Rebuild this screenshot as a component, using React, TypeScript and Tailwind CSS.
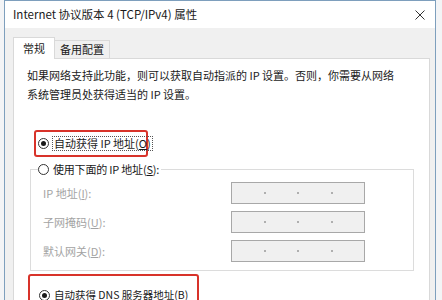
import React from "react";

const FONT = { fontFamily: "'Noto Sans CJK SC', 'Noto Sans', sans-serif" };

function Radio({ checked }: { checked?: boolean }) {
  return (
    <span className="w-[11px] h-[11px] rounded-full border border-[#333] bg-white flex items-center justify-center shrink-0">
      {checked && <span className="w-[5px] h-[5px] rounded-full bg-[#1a1a1a]" />}
    </span>
  );
}

function IpBox() {
  return (
    <div className="w-[134px] h-[22px] border border-[#a8a8a8] bg-[#f0f0f0] flex items-center">
      <span className="flex-1" />
      <span className="w-[2px] h-[2px] rounded-full bg-[#9a9a9a]" />
      <span className="flex-1" />
      <span className="w-[2px] h-[2px] rounded-full bg-[#9a9a9a]" />
      <span className="flex-1" />
      <span className="w-[2px] h-[2px] rounded-full bg-[#9a9a9a]" />
      <span className="flex-1" />
    </div>
  );
}

function Row({ label, u, rest }: { label: string; u: string; rest: string }) {
  return (
    <div className="flex items-center h-[22px]">
      <span className="w-[193px] pl-[5px] text-[11px] leading-[14px] text-[#a3a3a3]">
        {label}(<span className="underline">{u}</span>){rest}
      </span>
      <IpBox />
    </div>
  );
}

export default function App() {
  return (
    <div className="w-[442px] h-[300px] overflow-hidden bg-[#f3f4f6]" style={FONT}>
      <div className="ml-[4px] w-[432px] h-[300px] border-x border-t border-[#7e9fbd] flex flex-col">
        {/* title bar */}
        <div className="h-[27px] bg-white flex items-center pl-[8px] pr-[10px] shrink-0">
          <span className="text-[11.5px] text-[#1a1a1a] leading-none">Internet 协议版本 4 (TCP/IPv4) 属性</span>
          <span className="ml-auto">
            <svg width="10" height="10" viewBox="0 0 10 10">
              <path d="M0.5 0.5 L9.5 9.5 M9.5 0.5 L0.5 9.5" stroke="#333" strokeWidth="1" />
            </svg>
          </span>
        </div>
        {/* body */}
        <div className="flex-1 bg-[#f0f0f0] pl-[8px] pr-[5px] pt-[9px] flex flex-col">
          <div className="flex items-end h-[21px]">
            <div className="w-[42px] h-[22px] bg-white border-t border-l border-r border-[#d9d9d9] -mb-px relative z-10 flex items-start justify-center pt-[3px]">
              <span className="text-[11px] leading-[14px] text-[#1a1a1a]">常规</span>
            </div>
            <div className="w-[55px] h-[18px] bg-[#f0f0f0] border-t border-r border-[#d9d9d9] flex items-start justify-center pt-[1px]">
              <span className="text-[11px] leading-[14px] text-[#1a1a1a]">备用配置</span>
            </div>
          </div>
          <div className="flex-1 bg-white border border-[#d9d9d9] pl-[13px]">
            <p className="mt-[7px] text-[11px] leading-[19px] text-[#1a1a1a]">
              如果网络支持此功能，则可以获取自动指派的 IP 设置。否则，你需要从网络
              <br />
              系统管理员处获得适当的 IP 设置。
            </p>
            <div className="mt-[26px] ml-[7px] w-[114px] h-[27px] border-2 border-[#d8332a] rounded-[3px] flex items-center pl-[2px]">
              <Radio checked />
              <span className="ml-[3px] border border-dotted border-[#555] px-[1px] text-[11px] leading-[13px] text-[#1a1a1a] whitespace-nowrap">
                自动获得 IP 地址(<span className="underline">O</span>)
              </span>
            </div>
            <fieldset className="mt-[4px] ml-[3px] w-[384px] border border-[#dcdcdc] pl-[7px] pb-[8px]">
              <legend className="h-[16px] flex items-center pr-[2px]">
                <Radio />
                <span className="ml-[4px] text-[11px] leading-[14px] text-[#1a1a1a] whitespace-nowrap tracking-[-0.2px]">
                  使用下面的 IP 地址(<span className="underline">S</span>):
                </span>
              </legend>
              <div className="mt-[5px] flex flex-col gap-[7px]">
                <Row label="IP 地址" u="I" rest=":" />
                <Row label="子网掩码" u="U" rest=":" />
                <Row label="默认网关" u="D" rest=":" />
              </div>
            </fieldset>
            <div className="mt-[3px] ml-[1px] w-[171px] h-[40px] border-2 border-[#d8332a] rounded-[3px] pl-[9px] pt-[11px]">
              <div className="flex items-center h-[16px]">
                <Radio checked />
                <span className="ml-[4px] text-[10.5px] leading-[14px] text-[#1a1a1a] whitespace-nowrap">
                  自动获得 DNS 服务器地址(<span className="underline">B</span>)
                </span>
              </div>
            </div>
          </div>
        </div>
      </div>
    </div>
  );
}
